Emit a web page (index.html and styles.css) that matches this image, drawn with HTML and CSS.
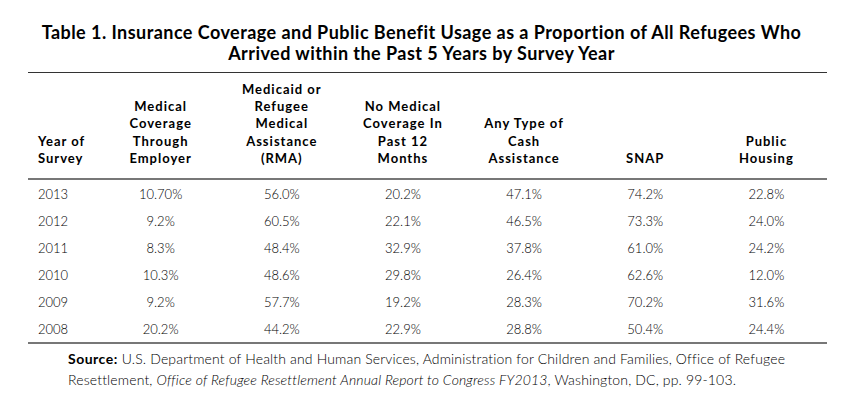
FILE: index.html
```html
<!DOCTYPE html>
<html>
<head>
<meta charset="utf-8">
<link rel="stylesheet" href="styles.css">
</head>
<body>
<div class="page">
  <h1 class="title">Table 1. Insurance Coverage and Public Benefit Usage as a Proportion of All Refugees Who<br>Arrived within the Past 5 Years by Survey Year</h1>
  <table class="data">
    <colgroup>
      <col class="c-year"><col class="c-mid"><col class="c-mid"><col class="c-mid"><col class="c-mid"><col class="c-mid"><col class="c-last">
    </colgroup>
    <thead>
      <tr>
        <th class="year">Year of<br>Survey</th>
        <th>Medical<br>Coverage<br>Through<br>Employer</th>
        <th>Medicaid or<br>Refugee<br>Medical<br>Assistance<br>(RMA)</th>
        <th>No Medical<br>Coverage In<br>Past 12<br>Months</th>
        <th>Any Type of<br>Cash<br>Assistance</th>
        <th>SNAP</th>
        <th>Public<br>Housing</th>
      </tr>
    </thead>
    <tbody>
      <tr><td class="year">2013</td><td>10.70%</td><td>56.0%</td><td>20.2%</td><td>47.1%</td><td>74.2%</td><td>22.8%</td></tr>
      <tr><td class="year">2012</td><td>9.2%</td><td>60.5%</td><td>22.1%</td><td>46.5%</td><td>73.3%</td><td>24.0%</td></tr>
      <tr><td class="year">2011</td><td>8.3%</td><td>48.4%</td><td>32.9%</td><td>37.8%</td><td>61.0%</td><td>24.2%</td></tr>
      <tr><td class="year">2010</td><td>10.3%</td><td>48.6%</td><td>29.8%</td><td>26.4%</td><td>62.6%</td><td>12.0%</td></tr>
      <tr><td class="year">2009</td><td>9.2%</td><td>57.7%</td><td>19.2%</td><td>28.3%</td><td>70.2%</td><td>31.6%</td></tr>
      <tr><td class="year">2008</td><td>20.2%</td><td>44.2%</td><td>22.9%</td><td>28.8%</td><td>50.4%</td><td>24.4%</td></tr>
    </tbody>
  </table>
  <p class="source"><b>Source:</b> U.S. Department of Health and Human Services, Administration for Children and Families, Office of Refugee<br>Resettlement, <i>Office of Refugee Resettlement Annual Report to Congress FY2013</i>, Washington, DC, pp. 99-103.</p>
</div>
</body>
</html>
```

FILE: styles.css
```css
html, body {
  margin: 0;
  padding: 0;
  background: #fff;
}
body {
  font-family: "Lato", "Open Sans", sans-serif;
  color: #000;
}
.page {
  width: 843px;
  padding-top: 22px;
}
.title {
  margin: 0 0 8px 0;
  font-size: 18px;
  line-height: 21px;
  font-weight: 700;
  text-align: center;
  letter-spacing: 0.45px;
}
.data {
  margin-left: 28px;
  width: 799px;
  border-collapse: collapse;
  table-layout: fixed;
  border-top: 1px solid #333;
  border-bottom: 2px solid #777;
}
.c-year { width: 72px; }
.c-mid { width: 121px; }
.c-last { width: 121px; }
.data th {
  font-size: 13px;
  line-height: 17.2px;
  font-weight: 700;
  letter-spacing: 1px;
  text-align: center;
  vertical-align: bottom;
  padding: 8px 0 11px 0;
  border-bottom: 2px solid #777;
}
.data td {
  font-size: 13px;
  font-weight: 300;
  text-align: center;
  height: 27px;
  padding: 0;
  vertical-align: middle;
}
.data .year {
  text-align: left;
  padding-left: 10px;
}
.source {
  margin: 4px 0 0 68px;
  font-size: 14px;
  line-height: 21px;
  font-weight: 300;
  letter-spacing: 0.15px;
}
.source b {
  font-weight: 700;
  letter-spacing: 0.5px;
}
```
